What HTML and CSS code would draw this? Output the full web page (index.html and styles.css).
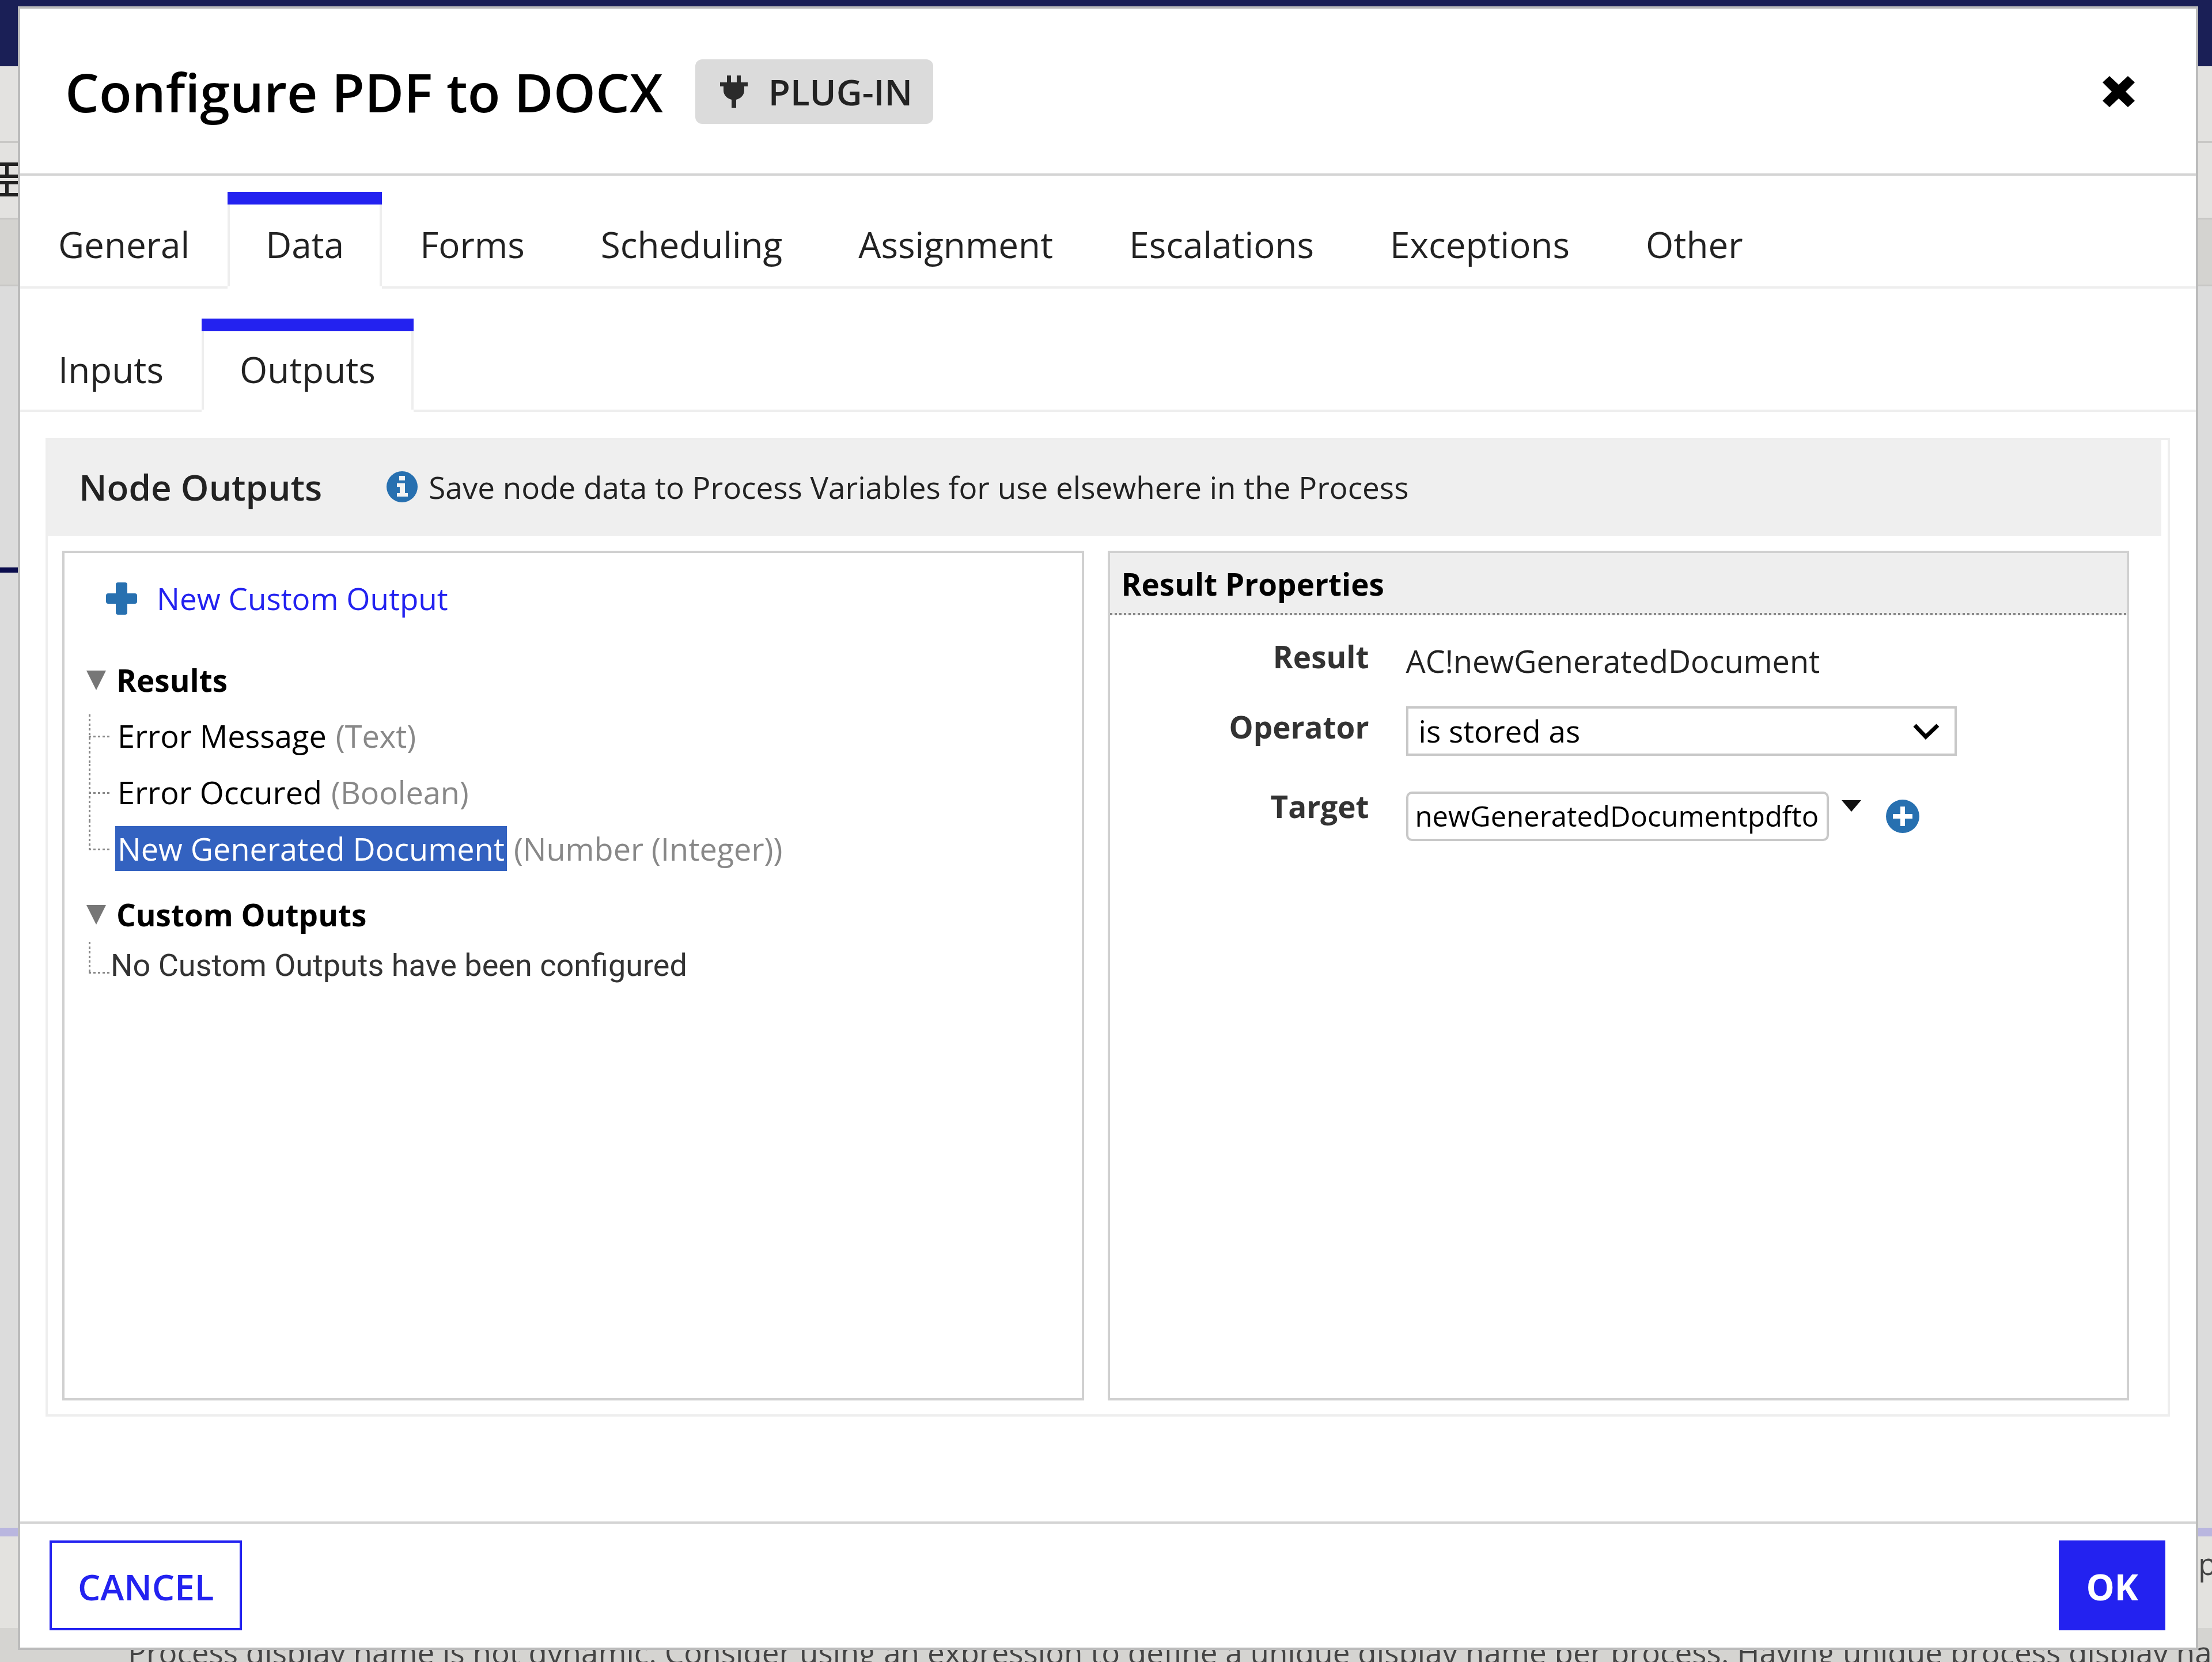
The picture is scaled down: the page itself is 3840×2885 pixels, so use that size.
FILE: index.html
```html
<!DOCTYPE html>
<html lang="en">
  <head>
    <meta charset="UTF-8" />
    <title>Configure PDF to DOCX</title>
    <link rel="stylesheet" href="styles.css">
  </head>
  <body>
    <!-- Process modeler behind the dialog -->
    <div class="modeler">
      <div class="modeler-nav"></div>
      <div class="modeler-menu"></div>
      <div class="modeler-toolbar">
        <svg class="grid-icon" viewBox="0 0 31 68">
          <path
            d="M0 4h31M0 25h31M0 36h31M0 57h31M12 4v21M12 36v21"
            fill="none"
            stroke="#222"
            stroke-width="6"
          />
        </svg>
      </div>
      <div class="modeler-strip"></div>
      <div class="modeler-canvas">
        <div class="lane-line"></div>
      </div>
      <div class="modeler-splitter"></div>
      <div class="modeler-problems"><span>p</span></div>
      <div class="modeler-message">
        Process display name is not dynamic. Consider using an expression to define a unique display name per process. Having unique process display names
      </div>
    </div>

    <div class="dialog" role="dialog" aria-labelledby="dialog-title">
      <header class="dialog-header">
        <h1 id="dialog-title">Configure PDF to DOCX</h1>
        <span class="badge">
          <svg class="plug-icon" viewBox="0 0 48 56">
            <path
              d="M12 0h7v12h10V0h7v12h12v7h-6v7c0 8-6 14-14 16v14h-8V42C12 40 6 34 6 26v-7H0v-7h12z"
              fill="#2b2b2b"
            />
          </svg>
          PLUG-IN
        </span>
        <button class="close" type="button" aria-label="Close">
          <svg viewBox="0 0 56 54">
            <path
              d="M12 0 28 15 44 0 56 11 40 27 56 43 44 54 28 39 12 54 0 43 16 27 0 11z"
              fill="#000"
            />
          </svg>
        </button>
      </header>

      <nav class="tabs tabs-main">
        <a class="tab" href="#">General</a>
        <a class="tab active" href="#">Data</a>
        <a class="tab" href="#">Forms</a>
        <a class="tab" href="#">Scheduling</a>
        <a class="tab" href="#">Assignment</a>
        <a class="tab" href="#">Escalations</a>
        <a class="tab" href="#">Exceptions</a>
        <a class="tab" href="#">Other</a>
      </nav>

      <nav class="tabs tabs-sub">
        <a class="tab" href="#">Inputs</a>
        <a class="tab active" href="#">Outputs</a>
      </nav>

      <main class="node-outputs">
        <div class="section-header">
          <h2>Node Outputs</h2>
          <svg class="info-icon" viewBox="0 0 54 54">
            <circle cx="27" cy="27" r="27" fill="#2770b0" />
            <path
              d="M22 8h10v8H22zM18 21h14v17h5v6H18v-6h5V27h-5z"
              fill="#f4f4f4"
            />
          </svg>
          <p>Save node data to Process Variables for use elsewhere in the Process</p>
        </div>

        <div class="panes">
          <section class="pane tree-pane">
            <a class="new-output" href="#">
              <svg viewBox="0 0 54 56">
                <path
                  d="M21 0h12q4 0 4 4v15h13q4 0 4 4v10q0 4-4 4H37v15q0 4-4 4H21q-4 0-4-4V37H4q-4 0-4-4V23q0-4 4-4h13V4q0-4 4-4z"
                  fill="#2770b0"
                />
              </svg>
              New Custom Output
            </a>

            <h3 class="tree-title">
              <svg viewBox="0 0 34 34"><path d="M0 0h34L17 34z" fill="#777" /></svg>
              Results
            </h3>
            <ul class="tree">
              <li><a href="#">Error Message</a><span class="type">(Text)</span></li>
              <li><a href="#">Error Occured</a><span class="type">(Boolean)</span></li>
              <li><a class="selected" href="#">New Generated Document</a><span class="type">(Number (Integer))</span></li>
            </ul>

            <h3 class="tree-title">
              <svg viewBox="0 0 34 34"><path d="M0 0h34L17 34z" fill="#777" /></svg>
              Custom Outputs
            </h3>
            <ul class="tree tree-empty">
              <li>No Custom Outputs have been configured</li>
            </ul>
          </section>

          <section class="pane">
            <h3 class="pane-title">Result Properties</h3>
            <form class="properties">
              <span class="label">Result</span>
              <span class="value">AC!newGeneratedDocument</span>

              <label class="label" for="operator">Operator</label>
              <div class="select">
                <select id="operator">
                  <option>is stored as</option>
                </select>
                <svg viewBox="0 0 46 28">
                  <path d="M3 3l19 20L43 3" fill="none" stroke="#000" stroke-width="7" />
                </svg>
              </div>

              <label class="label" for="target">Target</label>
              <div class="target">
                <input id="target" type="text" value="newGeneratedDocumentpdfto" />
                <button class="drop" type="button" aria-label="Choose variable">
                  <svg viewBox="0 0 34 20"><path d="M0 0h34L17 20z" fill="#111" /></svg>
                </button>
                <button class="add" type="button" aria-label="New variable">
                  <svg viewBox="0 0 58 58">
                    <circle cx="29" cy="29" r="29" fill="#2770b0" />
                    <path
                      d="M25 12h8v13h13v8H33v13h-8V33H12v-8h13z"
                      fill="#fff"
                    />
                  </svg>
                </button>
              </div>
            </form>
          </section>
        </div>
      </main>

      <footer class="dialog-footer">
        <button class="btn btn-cancel" type="button">CANCEL</button>
        <button class="btn btn-ok" type="button">OK</button>
      </footer>
    </div>
  </body>
</html>
```

FILE: styles.css
```css
* {
  margin: 0;
  padding: 0;
  box-sizing: border-box;
}

body {
  font-family: "Open Sans", Arial, sans-serif;
  font-size: 53px;
  color: #222;
  overflow: hidden;
}

a {
  color: inherit;
  text-decoration: none;
}

button,
input,
select {
  font: inherit;
  color: inherit;
}

svg {
  display: block;
  flex: none;
}

/* background page */

.modeler {
  height: 100vh;
  display: flex;
  flex-direction: column;
  overflow: hidden;
  background: #dcdcdc;
  color: #444;
}

.modeler-nav {
  height: 115px;
  background: #1a1f56;
}

.modeler-menu,
.modeler-toolbar {
  height: 133px;
  background: #e3e2e0;
  border-bottom: 3px solid #c8c7c5;
}

.modeler-toolbar {
  padding-top: 33px;
}

.grid-icon {
  width: 31px;
  height: 68px;
}

.modeler-strip {
  height: 116px;
  background: #d4d3d0;
  border-bottom: 3px solid #c8c7c5;
}

.modeler-canvas {
  flex: 1;
  padding-top: 488px;
}

.lane-line {
  width: 50%;
  height: 9px;
  background: #0b0d4d;
}

.modeler-splitter {
  height: 15px;
  background: #b9b6df;
}

.modeler-problems {
  height: 159px;
  padding: 10px 0;
  background: #e3e2df;
  text-align: right;
  white-space: nowrap;
}

.modeler-problems span {
  display: inline-block;
  width: 24px;
  text-align: left;
}

.modeler-message {
  height: 59px;
  padding: 5px 0 0 222px;
  background: #d5d4d1;
  white-space: nowrap;
}

/* dialog */

.dialog {
  position: fixed;
  inset: 11px 24px 21px 31px;
  display: flex;
  flex-direction: column;
  background: #fff;
  border: 4px solid #bbb;
}

.dialog-header {
  height: 290px;
  padding: 2px 106px 0 78px;
  display: flex;
  align-items: center;
  border-bottom: 4px solid #d4d4d4;
}

h1 {
  font-size: 93px;
  font-weight: 600;
  color: #000;
}

.badge {
  height: 112px;
  margin-left: 56px;
  padding: 0 36px 0 43px;
  display: flex;
  align-items: center;
  gap: 36px;
  font-size: 62px;
  font-weight: 600;
  background: #dbdbdb;
  border-radius: 12px;
}

.plug-icon {
  width: 48px;
  height: 56px;
}

.close {
  margin-left: auto;
  border: none;
  background: none;
}

.close svg {
  width: 56px;
  height: 54px;
}

.tabs {
  display: flex;
  font-size: 62px;
}

.tabs::after {
  content: "";
  flex: 1;
  border-bottom: 4px solid #eee;
}

.tab {
  padding: 0 66px 4px;
  line-height: 138px;
  border-top: 22px solid transparent;
  border-bottom: 4px solid #eee;
}

.tabs-main {
  padding-top: 28px;
}

.tabs-sub {
  padding-top: 52px;
}

.tabs-sub .tab {
  line-height: 132px;
}

.tab.active {
  position: relative;
  border-bottom-color: transparent;
  box-shadow: inset 4px 0 #eee, inset -4px 0 #eee;
}

.tab.active::before {
  content: "";
  position: absolute;
  inset: -22px 0 auto;
  height: 22px;
  background: #2322f0;
}

.node-outputs {
  flex: 1;
  margin: 45px 45px 182px 44px;
  display: flex;
  flex-direction: column;
  border: 4px solid #eee;
}

.section-header {
  height: 166px;
  margin-right: 11px;
  padding: 0 0 4px 54px;
  display: flex;
  align-items: center;
  background: #efefef;
}

h2 {
  font-size: 62px;
  font-weight: 600;
}

.info-icon {
  width: 54px;
  height: 54px;
  margin: 0 19px 0 112px;
}

.panes {
  flex: 1;
  padding: 26px 67px 24px 25px;
  display: grid;
  grid-template-columns: 1fr 1fr;
  gap: 41px;
}

.pane {
  border: 4px solid #d0d0d0;
  color: #000;
}

.tree-pane {
  padding: 43px 38px;
}

.new-output {
  display: flex;
  align-items: center;
  gap: 34px;
  padding-left: 34px;
  line-height: 72px;
  color: #2322f0;
}

.new-output svg {
  width: 54px;
  height: 56px;
}

.tree-title {
  display: flex;
  align-items: center;
  gap: 18px;
  margin-top: 70px;
  font-size: 53px;
  line-height: 72px;
}

.tree + .tree-title {
  margin-top: 30px;
}

.tree-title svg {
  width: 34px;
  height: 34px;
}

.tree {
  margin-top: 11px;
  font-size: 54px;
  list-style: none;
}

.tree li {
  position: relative;
  height: 98px;
  padding-left: 50px;
  display: flex;
  align-items: center;
  gap: 12px;
}

/* dotted connectors */
.tree li::before,
.tree li::after {
  content: "";
  position: absolute;
  left: 4px;
}

.tree li::before {
  top: 0;
  bottom: 0;
  width: 3px;
  background: repeating-linear-gradient(#888 0 4px, transparent 4px 8px);
}

.tree li:first-child::before {
  top: 12px;
}

.tree li:last-child::before {
  bottom: 50%;
}

.tree li::after {
  top: 50%;
  width: 38px;
  height: 3px;
  background: repeating-linear-gradient(90deg, #888 0 4px, transparent 4px 8px);
}

.tree a {
  padding: 0 4px;
  line-height: 78px;
}

.tree .selected {
  background: #3362c0;
  color: #fff;
}

.type {
  color: #888;
}

.tree-empty li {
  height: 80px;
  padding-left: 42px;
  font-family: Roboto, Arial, sans-serif;
  color: #333;
}

/* the stub meets the text at its baseline */
.tree-empty li::after {
  top: 52px;
}

.tree-empty li:first-child::before {
  top: 0;
  bottom: 28px;
}

.pane-title {
  padding: 0 20px;
  font-size: 53px;
  line-height: 108px;
  background:
    repeating-linear-gradient(90deg, #888 0 4px, #eee 4px 8px) bottom / 100% 4px no-repeat,
    #eee;
}

.properties {
  padding-top: 36px;
  display: grid;
  grid-template-columns: 450px 1fr;
  column-gap: 64px;
}

.label {
  text-align: right;
  font-weight: bold;
  line-height: 72px;
  color: #333;
}

.value {
  height: 122px;
  padding-top: 7px;
  font-size: 54px;
  line-height: 72px;
  color: #222;
}

.select {
  width: 956px;
  height: 138px;
  position: relative;
}

.select select {
  width: 100%;
  height: 86px;
  padding: 0 18px 2px;
  appearance: none;
  border: 4px solid #c8c8c8;
  border-radius: 0;
  background: #fff;
}

.select svg {
  position: absolute;
  top: 30px;
  right: 30px;
  width: 46px;
  height: 28px;
}

.target {
  margin-top: 10px;
  display: flex;
}

.target input {
  width: 734px;
  height: 86px;
  padding: 0 12px 2px;
  font-size: 49px;
  border: 4px solid #c8c8c8;
  border-radius: 10px;
}

.target button {
  height: 86px;
  border: none;
  background: none;
}

.drop {
  margin-left: 22px;
  padding-bottom: 36px;
}

.drop svg {
  width: 34px;
  height: 20px;
}

.add {
  margin-left: 43px;
}

.add svg {
  width: 58px;
  height: 58px;
}

.dialog-footer {
  height: 219px;
  padding: 29px 53px 0 51px;
  display: flex;
  justify-content: space-between;
  align-items: flex-start;
  border-top: 4px solid #d4d4d4;
}

.btn {
  height: 156px;
  padding-top: 4px;
  font-size: 62px;
  border: 4px solid #2322f0;
}

.btn-cancel {
  padding-inline: 45px;
  font-weight: 600;
  background: #fff;
  color: #2322f0;
}

.btn-ok {
  padding-inline: 43px;
  font-weight: bold;
  background: #2322f0;
  color: #fff;
}
```
